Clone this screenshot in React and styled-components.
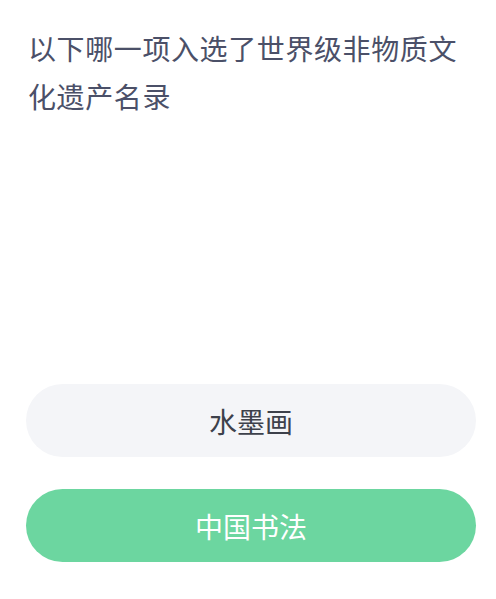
import React from "react";
import styled, { createGlobalStyle } from "styled-components";

const GlobalStyle = createGlobalStyle`
  html, body {
    margin: 0;
    padding: 0;
    background: #ffffff;
  }
  body {
    font-family: "Noto Sans CJK SC", "Noto Sans", sans-serif;
  }
`;

const options = [
  { label: "水墨画", correct: false },
  { label: "中国书法", correct: true },
];

const App = () => {
  return (
    <Wrapper>
      <GlobalStyle />
      <Question>以下哪一项入选了世界级非物质文化遗产名录</Question>
      <OptionList>
        {options.map((opt) => (
          <OptionButton key={opt.label} correct={opt.correct}>
            {opt.label}
          </OptionButton>
        ))}
      </OptionList>
    </Wrapper>
  );
};

const Wrapper = styled.div`
  width: 496px;
  height: 599px;
  box-sizing: border-box;
  padding: 24px 20px 0 26px;
  display: flex;
  flex-direction: column;
`;

const Question = styled.h1`
  margin: 0;
  padding-left: 2px;
  font-size: 28px;
  font-weight: 400;
  line-height: 48px;
  letter-spacing: 0.6px;
  color: #4b5068;
`;

const OptionList = styled.div`
  margin-top: 264px;
  display: flex;
  flex-direction: column;
  gap: 32px;
`;

const OptionButton = styled.div`
  width: 450px;
  height: 73px;
  border-radius: 37px;
  display: flex;
  align-items: center;
  justify-content: center;
  font-size: 28px;
  color: ${(p) => (p.correct ? "#ffffff" : "#3d414b")};
  background: ${(p) => (p.correct ? "#6cd6a0" : "#f4f5f8")};
`;

export default App;
